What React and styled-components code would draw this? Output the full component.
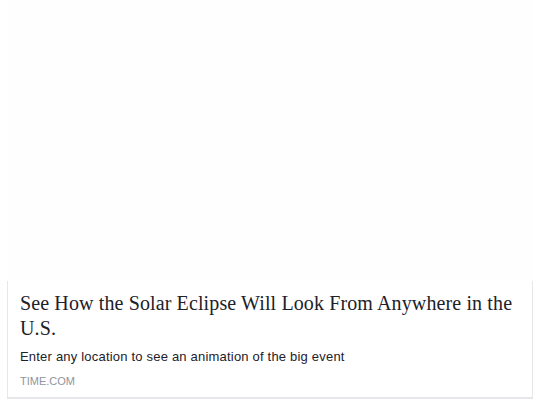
import React from "react";
import styled, { createGlobalStyle } from "styled-components";

const GlobalStyle = createGlobalStyle`
  html, body {
    margin: 0;
    padding: 0;
    background: #fff;
  }
`;

export default function App() {
  return (
    <Page>
      <GlobalStyle />
      <Card>
        <Picture />
        <Body>
          <Title>
            See How the Solar Eclipse Will Look From Anywhere in the U.S.
          </Title>
          <Summary>Enter any location to see an animation of the big event</Summary>
          <Source>time.com</Source>
        </Body>
      </Card>
    </Page>
  );
}

const Page = styled.div`
  width: 537px;
  height: 400px;
  padding-left: 7px;
  box-sizing: border-box;
  overflow: hidden;
`;

const Card = styled.div`
  width: 526px;
  display: flex;
  flex-direction: column;
`;

const Picture = styled.div`
  height: 281px;
  background: #fefefe;
`;

const Body = styled.div`
  display: flex;
  flex-direction: column;
  padding: 10px 14px 9px 12px;
  border: 1px solid #e6e7ea;
  border-top: none;
  border-bottom: 2px solid #e6e7ea;
`;

const Title = styled.div`
  font-family: "Liberation Serif", "Times New Roman", serif;
  font-size: 20px;
  line-height: 25px;
  letter-spacing: 0.12px;
  color: #1d2129;
  margin-bottom: 7px;
`;

const Summary = styled.div`
  font-family: "Liberation Sans", Arial, sans-serif;
  font-size: 13px;
  line-height: 17px;
  letter-spacing: 0.2px;
  color: #1d2129;
  margin-bottom: 9px;
`;

const Source = styled.div`
  font-family: "Liberation Sans", Arial, sans-serif;
  font-size: 11px;
  line-height: 14px;
  color: #90949c;
  text-transform: uppercase;
`;
